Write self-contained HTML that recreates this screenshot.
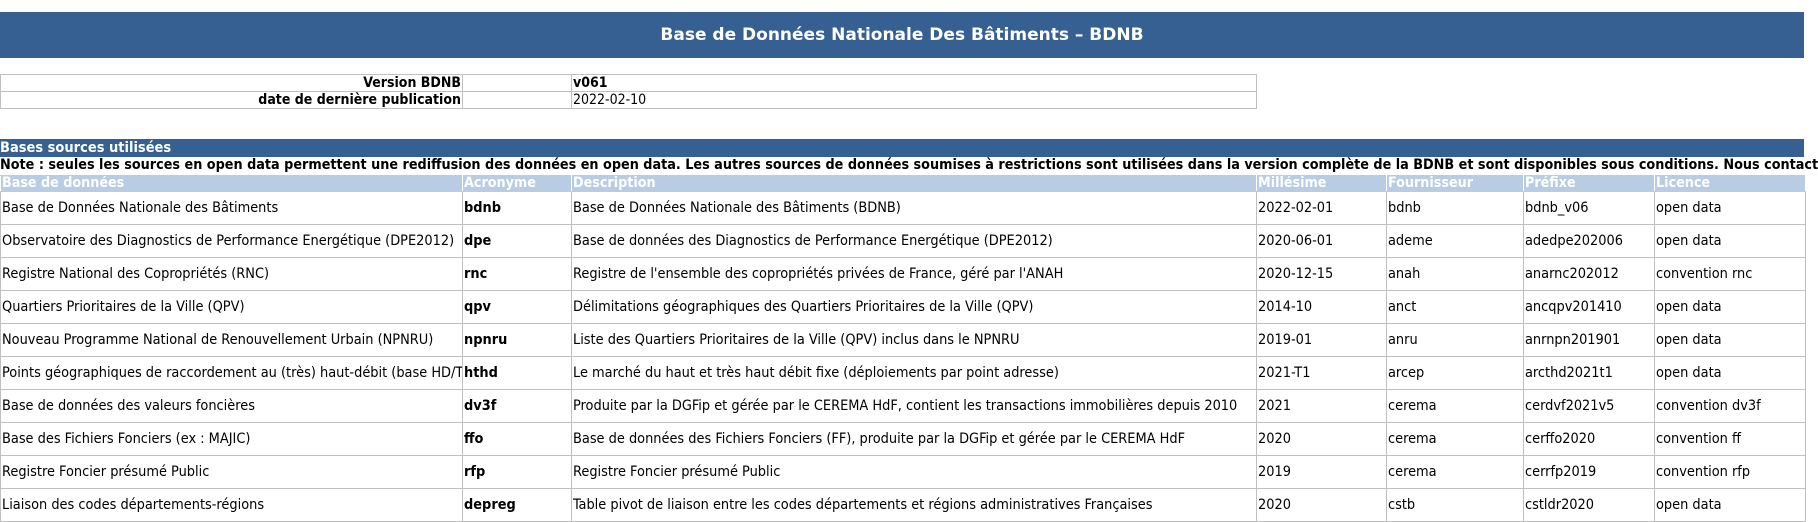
<!DOCTYPE html>
<html><head><meta charset="utf-8"><style>
body{margin:0;width:1818px;height:507px;overflow:hidden;background:#fff;font-family:"DejaVu Sans Condensed","DejaVu Sans","Liberation Sans",sans-serif;font-size:14px;color:#000;position:relative}
.abs{position:absolute;white-space:nowrap}
.title{left:0;top:12px;width:1804px;height:46px;background:#366092;color:#fff;font-weight:bold;font-size:17px;text-align:center;line-height:46px;font-family:"DejaVu Sans",sans-serif}
table{border-collapse:collapse;position:absolute;left:0;table-layout:fixed}
td{border:1px solid #c0c0c0;padding:0 1px;white-space:nowrap;overflow:hidden}
.ver td{height:16px;line-height:16px}
.data td{height:32px;line-height:32px;font-size:14.4px}
.data .hd td{background:#b8cce4;color:#fff;font-weight:bold;height:15px;line-height:15px;font-size:14.2px;border-color:#b8cce4 #fff #b8cce4 #fff}
.b{font-weight:bold}
</style></head><body>
<div class="abs title">Base de Données Nationale Des Bâtiments – BDNB</div>
<table class="ver" style="top:74px;width:1256px">
<colgroup><col style="width:462px"><col style="width:109px"><col style="width:685px"></colgroup>
<tr><td class="b" style="text-align:right">Version BDNB</td><td></td><td class="b">v061</td></tr>
<tr><td class="b" style="text-align:right">date de dernière publication</td><td></td><td>2022-02-10</td></tr>
</table>
<div class="abs" style="left:0;top:139px;width:1804px;height:18px;background:#366092;color:#fff;font-weight:bold;font-size:14.5px;line-height:18px">Bases sources utilisées</div>
<div class="abs b" style="left:0;top:157px;height:17px;line-height:17px;font-size:14.25px">Note : seules les sources en open data permettent une rediffusion des données en open data. Les autres sources de données soumises à restrictions sont utilisées dans la version complète de la BDNB et sont disponibles sous conditions. Nous contacter pour plus d'informations.</div>
<table class="data" style="top:175px;width:1805px">
<colgroup><col style="width:462px"><col style="width:109px"><col style="width:685px"><col style="width:130px"><col style="width:137px"><col style="width:131px"><col style="width:151px"></colgroup>
<tr class="hd"><td>Base de données</td><td>Acronyme</td><td>Description</td><td>Millésime</td><td>Fournisseur</td><td>Préfixe</td><td>Licence</td></tr>
<tr><td>Base de Données Nationale des Bâtiments</td><td class="b">bdnb</td><td>Base de Données Nationale des Bâtiments (BDNB)</td><td>2022-02-01</td><td>bdnb</td><td>bdnb_v06</td><td>open data</td></tr>
<tr><td>Observatoire des Diagnostics de Performance Energétique (DPE2012)</td><td class="b">dpe</td><td>Base de données des Diagnostics de Performance Energétique (DPE2012)</td><td>2020-06-01</td><td>ademe</td><td>adedpe202006</td><td>open data</td></tr>
<tr><td>Registre National des Copropriétés (RNC)</td><td class="b">rnc</td><td>Registre de l'ensemble des copropriétés privées de France, géré par l'ANAH</td><td>2020-12-15</td><td>anah</td><td>anarnc202012</td><td>convention rnc</td></tr>
<tr><td>Quartiers Prioritaires de la Ville (QPV)</td><td class="b">qpv</td><td>Délimitations géographiques des Quartiers Prioritaires de la Ville (QPV)</td><td>2014-10</td><td>anct</td><td>ancqpv201410</td><td>open data</td></tr>
<tr><td>Nouveau Programme National de Renouvellement Urbain (NPNRU)</td><td class="b">npnru</td><td>Liste des Quartiers Prioritaires de la Ville (QPV) inclus dans le NPNRU</td><td>2019-01</td><td>anru</td><td>anrnpn201901</td><td>open data</td></tr>
<tr><td>Points géographiques de raccordement au (très) haut-débit (base HD/THD)</td><td class="b">hthd</td><td>Le marché du haut et très haut débit fixe (déploiements par point adresse)</td><td>2021-T1</td><td>arcep</td><td>arcthd2021t1</td><td>open data</td></tr>
<tr><td>Base de données des valeurs foncières</td><td class="b">dv3f</td><td>Produite par la DGFip et gérée par le CEREMA HdF, contient les transactions immobilières depuis 2010</td><td>2021</td><td>cerema</td><td>cerdvf2021v5</td><td>convention dv3f</td></tr>
<tr><td>Base des Fichiers Fonciers (ex : MAJIC)</td><td class="b">ffo</td><td>Base de données des Fichiers Fonciers (FF), produite par la DGFip et gérée par le CEREMA HdF</td><td>2020</td><td>cerema</td><td>cerffo2020</td><td>convention ff</td></tr>
<tr><td>Registre Foncier présumé Public</td><td class="b">rfp</td><td>Registre Foncier présumé Public</td><td>2019</td><td>cerema</td><td>cerrfp2019</td><td>convention rfp</td></tr>
<tr><td>Liaison des codes départements-régions</td><td class="b">depreg</td><td>Table pivot de liaison entre les codes départements et régions administratives Françaises</td><td>2020</td><td>cstb</td><td>cstldr2020</td><td>open data</td></tr>
</table>
</body></html>
